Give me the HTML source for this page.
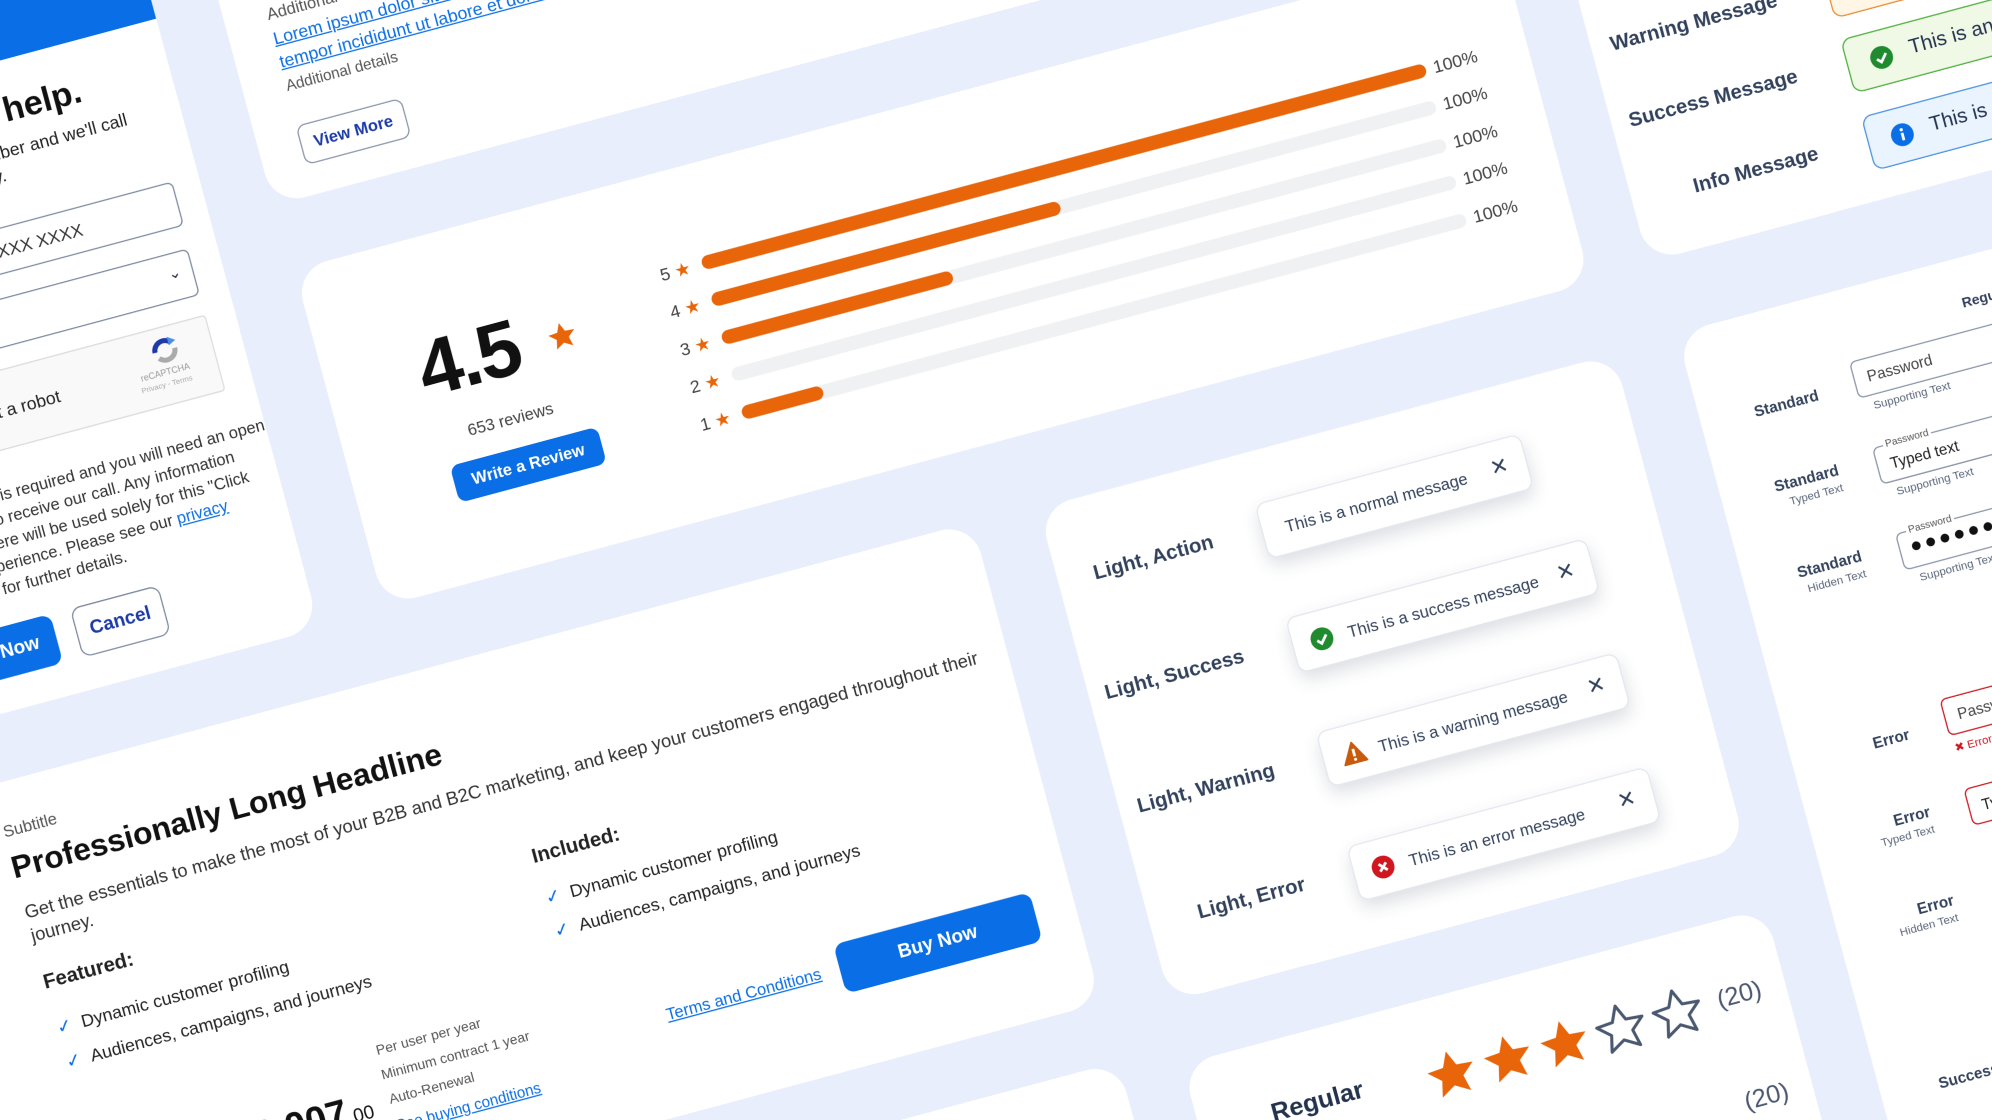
<!DOCTYPE html>
<html><head><meta charset="utf-8">
<style>
html,body{margin:0;padding:0;width:1992px;height:1120px;overflow:hidden;}
body{background:#e9eefc;font-family:"Liberation Sans",sans-serif;color:#23324d;}
.wrap{position:relative;width:1992px;height:1120px;overflow:hidden;}
.s{position:absolute;left:0;top:0;transform:scale(1.2704);transform-origin:0 0;}
.L{position:absolute;left:0;top:0;transform:rotate(-15deg);transform-origin:0 0;}
.a{position:absolute;white-space:nowrap;}
.card{position:absolute;background:#fff;border-radius:26px;}
.t{position:absolute;background:#fff;border-radius:8px;box-shadow:0 6px 14px rgba(40,50,80,.16);border:1px solid #e4e7ee;box-sizing:border-box;font-size:13px;color:#33425c;}
.x{position:absolute;right:14px;top:11px;font-size:17px;color:#33425c;}
.lbl{position:absolute;width:200px;text-align:right;font-size:16px;font-weight:bold;color:#33425c;}
.bar{position:absolute;height:11px;border-radius:6px;background:#f0f1f3;}
.bar i{position:absolute;left:0;top:0;height:11px;border-radius:6px;background:#e8650a;}
.fld{position:absolute;border:1.3px solid #8a95a8;border-radius:5px;height:30px;box-sizing:border-box;background:#fff;}
.sm{font-size:9px;color:#5a667a;}
</style></head><body>
<div class="wrap">
<div class="s"><div class="L">

<!-- Left help card -->
<div class="card" style="left:-500px;top:-200px;width:615px;height:743px;overflow:hidden;">
  <div style="position:absolute;left:0;top:0;width:615px;height:246px;background:#0a6ee6;"></div>
</div>
<div class="a" style="left:-200px;top:70px;width:243px;text-align:right;font-size:27px;font-weight:bold;color:#111;">We're here to help.</div>
<div class="a" style="left:-200px;top:108px;width:272px;text-align:right;font-size:14px;color:#222;">Enter your number and we'll call</div>
<div class="a" style="left:-200px;top:126px;width:169px;text-align:right;font-size:14px;color:#222;">you shortly.</div>
<div class="fld" style="left:-200px;top:173px;width:294px;height:36px;border-color:#7d8aa0;"></div>
<div class="a" style="left:-200px;top:183px;width:216px;font-size:14px;color:#333;text-align:right;">+1 XXX XXXX</div>
<div class="fld" style="left:-200px;top:227px;width:292px;height:38px;border-color:#7d8aa0;"></div>
<div class="a" style="left:72px;top:236px;font-size:12px;color:#23324d;">&#8964;</div>
<div style="position:absolute;left:-200px;top:281px;width:290px;height:60px;background:#f9f9f9;border:1px solid #ddd;border-radius:3px;"></div>
<div class="a" style="left:-200px;top:305px;width:165px;text-align:right;font-size:14px;color:#222;">I'm not a robot</div>
<svg class="a" style="left:40px;top:288px" width="28" height="24" viewBox="0 0 28 24"><path d="M6 12a8 8 0 0 1 14-5" stroke="#1c3aa9" stroke-width="4" fill="none"/><path d="M22 12a8 8 0 0 1-14 5" stroke="#aaa" stroke-width="4" fill="none"/><path d="M18 2l6 4-6 3z" fill="#4a90e2"/></svg>
<div class="a" style="left:30px;top:314px;font-size:7px;color:#999;">reCAPTCHA</div>
<div class="a" style="left:28px;top:324px;font-size:6px;color:#aaa;">Privacy - Terms</div>
<div class="a" style="left:-200px;top:369px;width:271px;text-align:right;font-size:13px;color:#333;">A phone number is required and you will need an open</div>
<div class="a" style="left:-200px;top:387px;width:285px;text-align:right;font-size:13px;color:#333;">line to receive our call. Any information</div>
<div class="a" style="left:-200px;top:405px;width:292px;text-align:right;font-size:13px;color:#333;">you enter here will be used solely for this "Click</div>
<div class="a" style="left:-200px;top:423px;width:270px;text-align:right;font-size:13px;color:#333;">to Call" experience. Please see our <span style="color:#0a6ee6;text-decoration:underline;">privacy</span></div>
<div class="a" style="left:-200px;top:441px;width:183px;text-align:right;font-size:13px;color:#333;"><span style="color:#0a6ee6;text-decoration:underline;">statement</span> for further details.</div>
<div class="a" style="left:-200px;top:477px;width:113px;height:40px;background:#0a6ee6;border-radius:8px;color:#fff;font-weight:bold;font-size:15px;line-height:40px;text-align:right;padding-right:14px;box-sizing:border-box;">Call Now</div>
<div class="a" style="left:-71px;top:477px;width:72px;height:40px;border:1.5px solid #7d8aa0;border-radius:8px;color:#1c3aa9;font-weight:bold;font-size:15px;line-height:37px;text-align:center;box-sizing:border-box;">Cancel</div>

<!-- top card -->
<div class="card" style="left:166px;top:-200px;width:986px;height:412px;"></div>
<div class="a" style="left:200px;top:58px;font-size:13px;color:#555;">Additional details</div>
<div class="a" style="left:200px;top:77px;font-size:14px;color:#0a6ee6;text-decoration:underline;">Lorem ipsum dolor sit amet, consectetur</div>
<div class="a" style="left:200px;top:96px;font-size:14px;color:#0a6ee6;text-decoration:underline;">tempor incididunt ut labore et dolore magna</div>
<div class="a" style="left:200px;top:117px;font-size:12px;color:#555;">Additional details</div>
<div class="a" style="left:199px;top:156px;width:86px;height:32px;border:1.5px solid #8a95a8;border-radius:7px;box-sizing:border-box;font-size:13px;font-weight:bold;color:#1c3aa9;text-align:center;line-height:29px;">View More</div>

<!-- rating card -->
<div class="card" style="left:169px;top:265px;width:983px;height:274px;"></div>
<div class="a" style="left:243px;top:332px;font-size:62px;font-weight:bold;color:#111;letter-spacing:-2px;line-height:74px;">4.5</div>
<svg class="a" style="left:347px;top:358px" width="24" height="24" viewBox="0 0 24 24"><path d="M12 1.5l3.1 7 7.4.6-5.6 4.9 1.7 7.3L12 17.4 5.4 21.3l1.7-7.3L1.5 9.1l7.4-.6z" fill="#e8650a"/></svg>
<div class="a" style="left:268px;top:415px;font-size:13px;color:#444;">653 reviews</div>
<div class="a" style="left:247px;top:446px;width:120px;height:30px;background:#0a6ee6;border-radius:7px;color:#fff;font-weight:bold;font-size:13px;text-align:center;line-height:30px;">Write a Review</div>
<div class="a" style="left:446px;top:336px;font-size:14px;color:#444;line-height:16px;">5 <span style="color:#e8650a">&#9733;</span></div>
<div class="a" style="left:446px;top:366px;font-size:14px;color:#444;line-height:16px;">4 <span style="color:#e8650a">&#9733;</span></div>
<div class="a" style="left:446px;top:397px;font-size:14px;color:#444;line-height:16px;">3 <span style="color:#e8650a">&#9733;</span></div>
<div class="a" style="left:446px;top:427px;font-size:14px;color:#444;line-height:16px;">2 <span style="color:#e8650a">&#9733;</span></div>
<div class="a" style="left:446px;top:458px;font-size:14px;color:#444;line-height:16px;">1 <span style="color:#e8650a">&#9733;</span></div>
<div class="bar" style="left:480px;top:338px;width:590px;"><i style="width:590px"></i></div>
<div class="bar" style="left:480px;top:368px;width:590px;"><i style="width:284px"></i></div>
<div class="bar" style="left:480px;top:399px;width:590px;"><i style="width:188px"></i></div>
<div class="bar" style="left:480px;top:429px;width:590px;"></div>
<div class="bar" style="left:480px;top:460px;width:590px;"><i style="width:66px"></i></div>
<div class="a" style="left:1076px;top:335px;font-size:14px;color:#444;line-height:16px;">100%</div>
<div class="a" style="left:1076px;top:365px;font-size:14px;color:#444;line-height:16px;">100%</div>
<div class="a" style="left:1076px;top:396px;font-size:14px;color:#444;line-height:16px;">100%</div>
<div class="a" style="left:1076px;top:426px;font-size:14px;color:#444;line-height:16px;">100%</div>
<div class="a" style="left:1076px;top:457px;font-size:14px;color:#444;line-height:16px;">100%</div>

<!-- product card -->
<div class="card" style="left:-400px;top:595px;width:1033px;height:392px;"></div>
<div class="a" style="left:-167px;top:626px;font-size:13px;color:#555;">Subtitle</div>
<div class="a" style="left:-168px;top:649px;font-size:25px;font-weight:bold;color:#111;">Professionally Long Headline</div>
<div class="a" style="left:-167px;top:692px;font-size:14.5px;color:#333;">Get the essentials to make the most of your B2B and B2C marketing, and keep your customers engaged throughout their</div>
<div class="a" style="left:-167px;top:711px;font-size:14.5px;color:#333;">journey.</div>
<div class="a" style="left:-167px;top:748px;font-size:16px;font-weight:bold;color:#222;">Featured:</div>
<div class="a" style="left:-166px;top:785px;font-size:14px;color:#222;"><span style="color:#0a6ee6;margin-right:8px;">&#10003;</span>Dynamic customer profiling</div>
<div class="a" style="left:-166px;top:813px;font-size:14px;color:#222;"><span style="color:#0a6ee6;margin-right:8px;">&#10003;</span>Audiences, campaigns, and journeys</div>
<div class="a" style="left:230px;top:752px;font-size:16px;font-weight:bold;color:#222;">Included:</div>
<div class="a" style="left:232px;top:786px;font-size:14px;color:#222;"><span style="color:#0a6ee6;margin-right:8px;">&#10003;</span>Dynamic customer profiling</div>
<div class="a" style="left:232px;top:813px;font-size:14px;color:#222;"><span style="color:#0a6ee6;margin-right:8px;">&#10003;</span>Audiences, campaigns, and journeys</div>
<div class="a" style="left:441px;top:888px;width:160px;height:40px;background:#0a6ee6;border-radius:8px;color:#fff;font-weight:bold;font-size:15px;text-align:center;line-height:40px;">Buy Now</div>
<div class="a" style="left:300px;top:900px;font-size:13px;color:#0a6ee6;text-decoration:underline;">Terms and Conditions</div>
<div class="a" style="left:72px;top:870px;font-size:11px;color:#555;">Per user per year</div>
<div class="a" style="left:71px;top:890px;font-size:11px;color:#555;">Minimum contract 1 year</div>
<div class="a" style="left:72px;top:910px;font-size:11px;color:#555;">Auto-Renewal</div>
<div class="a" style="left:72px;top:930px;font-size:12px;color:#0a6ee6;text-decoration:underline;">See buying conditions</div>
<div class="a" style="left:-92px;top:900px;width:150px;text-align:right;font-size:30px;font-weight:bold;color:#111;">$2,007<span style="font-size:15px;font-weight:normal;">.00</span></div>

<!-- card under product -->
<div class="card" style="left:-400px;top:1035px;width:1034px;height:400px;"></div>

<!-- toast card -->
<div class="card" style="left:686px;top:598px;width:469px;height:402px;"></div>
<div class="lbl" style="left:612px;top:651px;">Light, Action</div>
<div class="lbl" style="left:612px;top:744px;">Light, Success</div>
<div class="lbl" style="left:612px;top:837px;">Light, Warning</div>
<div class="lbl" style="left:612px;top:930px;">Light, Error</div>
<div class="t" style="left:851px;top:639px;width:216px;height:45px;"><span class="a" style="left:18px;top:15px;">This is a normal message</span><span class="x">&#10005;</span></div>
<div class="t" style="left:851px;top:732px;width:245px;height:45px;">
 <svg class="a" style="left:14px;top:13px" width="18" height="18" viewBox="0 0 18 18"><circle cx="9" cy="9" r="9" fill="#1f8a2e"/><path d="M5 9.5l3 3 5-6" stroke="#fff" stroke-width="2.2" fill="none"/></svg>
 <span class="a" style="left:44px;top:15px;">This is a success message</span><span class="x">&#10005;</span></div>
<div class="t" style="left:851px;top:825px;width:245px;height:45px;">
 <svg class="a" style="left:14px;top:13px" width="20" height="18" viewBox="0 0 20 18"><path d="M10 1l9 16H1z" fill="#c85a0a" stroke="#c85a0a" stroke-linejoin="round" stroke-width="1.5"/><path d="M10 6v6" stroke="#fff" stroke-width="2.2"/><circle cx="10" cy="14.5" r="1.2" fill="#fff"/></svg>
 <span class="a" style="left:44px;top:15px;">This is a warning message</span><span class="x">&#10005;</span></div>
<div class="t" style="left:851px;top:918px;width:245px;height:45px;">
 <svg class="a" style="left:14px;top:13px" width="18" height="18" viewBox="0 0 18 18"><circle cx="9" cy="9" r="9" fill="#d0161f"/><path d="M6 6l6 6M12 6l-6 6" stroke="#fff" stroke-width="2.2"/></svg>
 <span class="a" style="left:44px;top:15px;">This is an error message</span><span class="x">&#10005;</span></div>

<!-- stars card -->
<div class="card" style="left:682px;top:1050px;width:475px;height:300px;"></div>
<div class="a" style="left:740px;top:1095px;font-size:20px;font-weight:bold;color:#23324d;">Regular</div>
<svg class="a" style="left:865px;top:1092px" width="230" height="42" viewBox="0 0 230 42">
<g stroke-linejoin="round">
<path d="M20 2l5.4 12 13 1.1-9.8 8.6 3 12.8L20 29.6 8.4 36.5l3-12.8L1.6 15.1l13-1.1z" fill="#e8650a"/>
<path transform="translate(46 0)" d="M20 2l5.4 12 13 1.1-9.8 8.6 3 12.8L20 29.6 8.4 36.5l3-12.8L1.6 15.1l13-1.1z" fill="#e8650a"/>
<path transform="translate(92 0)" d="M20 2l5.4 12 13 1.1-9.8 8.6 3 12.8L20 29.6 8.4 36.5l3-12.8L1.6 15.1l13-1.1z" fill="#e8650a"/>
<path transform="translate(138 0)" d="M20 2l5.4 12 13 1.1-9.8 8.6 3 12.8L20 29.6 8.4 36.5l3-12.8L1.6 15.1l13-1.1z" fill="none" stroke="#4a5870" stroke-width="2.4"/>
<path transform="translate(184 0)" d="M20 2l5.4 12 13 1.1-9.8 8.6 3 12.8L20 29.6 8.4 36.5l3-12.8L1.6 15.1l13-1.1z" fill="none" stroke="#4a5870" stroke-width="2.4"/>
</g></svg>
<div class="a" style="left:1102px;top:1100px;font-size:20px;color:#4a5870;">(20)</div>
<div class="a" style="left:1102px;top:1183px;font-size:20px;color:#4a5870;">(20)</div>

<!-- right top card -->
<div class="card" style="left:1200px;top:-200px;width:600px;height:735px;"></div>
<div class="lbl" style="left:1151px;top:354px;">Warning Message</div>
<div class="lbl" style="left:1151px;top:416px;">Success Message</div>
<div class="lbl" style="left:1151px;top:479px;">Info Message</div>
<div class="a" style="left:1391px;top:342px;width:300px;height:44px;border:1.5px solid #e88a30;background:#fff6e6;border-radius:8px;"></div>
<div class="a" style="left:1391px;top:405px;width:300px;height:44px;border:1.5px solid #4caf3a;background:#f0f8e6;border-radius:8px;box-sizing:border-box;">
 <svg class="a" style="left:18px;top:12px" width="18" height="18" viewBox="0 0 18 18"><circle cx="9" cy="9" r="9" fill="#1f8a2e"/><path d="M5 9.5l3 3 5-6" stroke="#fff" stroke-width="2.2" fill="none"/></svg>
 <span class="a" style="left:50px;top:11px;font-size:16px;color:#23324d;">This is an alert</span></div>
<div class="a" style="left:1391px;top:468px;width:300px;height:44px;border:1.5px solid #4a90e2;background:#eaf4ff;border-radius:8px;box-sizing:border-box;">
 <svg class="a" style="left:18px;top:12px" width="18" height="18" viewBox="0 0 18 18"><circle cx="9" cy="9" r="9" fill="#0a6ee6"/><rect x="8" y="7.5" width="2.2" height="6" fill="#fff"/><circle cx="9.1" cy="5" r="1.3" fill="#fff"/></svg>
 <span class="a" style="left:50px;top:11px;font-size:16px;color:#23324d;">This is an alert</span></div>

<!-- right password card -->
<div class="card" style="left:1207px;top:595px;width:600px;height:700px;"></div>
<div class="a" style="left:1430px;top:625px;font-size:11px;font-weight:bold;color:#33425c;">Regular</div>
<div class="lbl" style="left:1102px;top:664px;font-size:12px;">Standard</div>
<div class="fld" style="left:1332px;top:652px;width:210px;"><span class="a" style="left:10px;top:7px;font-size:12px;color:#444;">Password</span></div>
<div class="a sm" style="left:1342px;top:685px;">Supporting Text</div>
<div class="lbl" style="left:1102px;top:725px;font-size:12px;">Standard</div>
<div class="a sm" style="left:1102px;top:741px;width:200px;text-align:right;">Typed Text</div>
<div class="fld" style="left:1332px;top:722px;width:210px;"><span class="a" style="left:8px;top:-6px;font-size:8px;color:#555;background:#fff;padding:0 2px;">Password</span><span class="a" style="left:10px;top:8px;font-size:12px;color:#222;">Typed text</span></div>
<div class="a sm" style="left:1342px;top:755px;">Supporting Text</div>
<div class="lbl" style="left:1102px;top:795px;font-size:12px;">Standard</div>
<div class="a sm" style="left:1102px;top:811px;width:200px;text-align:right;">Hidden Text</div>
<div class="fld" style="left:1332px;top:792px;width:210px;"><span class="a" style="left:8px;top:-6px;font-size:8px;color:#555;background:#fff;padding:0 2px;">Password</span><span class="a" style="left:8px;top:4px;font-size:16px;color:#111;letter-spacing:2px;">&#9679;&#9679;&#9679;&#9679;&#9679;&#9679;</span></div>
<div class="a sm" style="left:1342px;top:825px;">Supporting Text</div>
<div class="lbl" style="left:1102px;top:940px;font-size:12px;">Error</div>
<div class="fld" style="left:1332px;top:927px;width:210px;border-color:#d0161f;"><span class="a" style="left:10px;top:7px;font-size:12px;color:#444;">Password</span></div>
<div class="a" style="left:1334px;top:962px;font-size:9px;color:#d0161f;">&#10006; Error</div>
<div class="lbl" style="left:1102px;top:1003px;font-size:12px;">Error</div>
<div class="a sm" style="left:1102px;top:1019px;width:200px;text-align:right;">Typed Text</div>
<div class="fld" style="left:1332px;top:1000px;width:210px;border-color:#d0161f;"><span class="a" style="left:10px;top:8px;font-size:12px;color:#222;">Typed text</span></div>
<div class="lbl" style="left:1102px;top:1075px;font-size:12px;">Error</div>
<div class="a sm" style="left:1102px;top:1091px;width:200px;text-align:right;">Hidden Text</div>
<div class="lbl" style="left:1102px;top:1212px;font-size:12px;">Success</div>

</div></div>
</div>
</body></html>
